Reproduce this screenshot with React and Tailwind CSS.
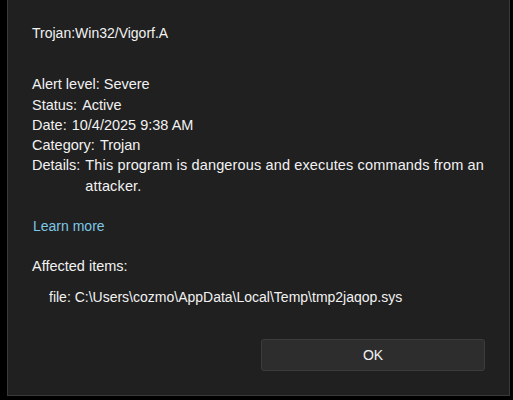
import React from 'react';

const rows = [
  { label: 'Status:', value: 'Active' },
  { label: 'Date:', value: '10/4/2025 9:38 AM' },
  { label: 'Category:', value: 'Trojan' },
  { label: 'Details:', value: 'This program is dangerous and executes commands from an attacker.', wide: true },
];

const App = () => {
  return (
    <div className="w-[513px] h-[400px] bg-black overflow-hidden">
      <div
        className="ml-[7px] w-[503px] h-[396px] bg-[#202020] border-x border-b border-[#3a3a3a] text-[#f2f2f2] text-[14.5px] leading-[20.3px] flex flex-col"
        style={{ fontFamily: '"Liberation Sans", Arial, sans-serif' }}
      >
        <div className="pl-[24px] pr-[20px] pt-[23px]">
          <div className="text-[14px]">Trojan:Win32/Vigorf.A</div>

          <div className="mt-[31px]">
            <div>Alert level: Severe</div>
            {rows.map((r) => (
              <div key={r.label} className="flex gap-[5px]">
                <span className="shrink-0">{r.label}</span>
                <span className={r.wide ? 'tracking-[0.14px]' : ''}>{r.value}</span>
              </div>
            ))}
          </div>

          <a className="block mt-[20px] ml-[1px] text-[#7fc7e6] text-[14px]">Learn more</a>

          <div className="mt-[20px]">Affected items:</div>
          <div className="mt-[10px] pl-[17px] text-[14px]">
            file: C:\Users\cozmo\AppData\Local\Temp\tmp2jaqop.sys
          </div>
        </div>

        <div className="mt-auto mb-[24px] flex justify-end pr-[24px]">
          <button className="w-[224px] h-[32px] bg-[#2d2d2d] border border-[#3c3c3c] rounded-[3px] text-[14px] text-[#f2f2f2]">
            OK
          </button>
        </div>
      </div>
    </div>
  );
};

export default App;
